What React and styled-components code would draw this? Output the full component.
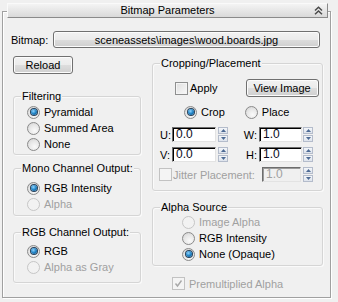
import styled, { createGlobalStyle } from "styled-components";

const GlobalStyle = createGlobalStyle`
  body {
    margin: 0;
    background: #f0f0f0;
    font-family: "Liberation Sans", Arial, sans-serif;
    font-size: 11px;
    color: #000;
  }
  * { box-sizing: border-box; }
`;

const Page = styled.div`
  width: 338px;
  height: 302px;
  padding: 11px 0 0 2px;
`;

const Frame = styled.div`
  width: 329px;
  height: 287px;
  border: 1px solid #a0a0a0;
  box-shadow: inset 1px 1px 0 #fff, 1px 1px 0 #fff;
`;

const TitleBar = styled.div`
  margin: -9px 2px 0 4px;
  height: 15px;
  display: grid;
  grid-template-columns: 1fr auto 1fr;
  align-items: center;
  border: 1px solid;
  border-color: #fafafa #8a8a8a #8a8a8a #fafafa;
  background: linear-gradient(#f4f4f4, #d9d9d9);
  line-height: 13px;
`;

const Title = styled.span`
  grid-column: 2;
`;

const Collapse = styled.svg`
  grid-column: 3;
  justify-self: end;
  margin-right: 4px;
`;

const BitmapRow = styled.div`
  display: flex;
  align-items: center;
  margin-top: 13px;
  padding-left: 8px;
`;

const Label = styled.span`
  width: ${(p) => p.$w || "auto"}px;
  flex: none;
  color: ${(p) => (p.$disabled ? "#a0a0a0" : "#000")};
  text-align: ${(p) => p.$align || "left"};
  padding-right: ${(p) => (p.$align === "right" ? 2 : 0)}px;
  white-space: nowrap;
`;

const Button = styled.button`
  width: ${(p) => p.$w}px;
  height: ${(p) => p.$h || 18}px;
  flex: none;
  padding: 0;
  font: inherit;
  color: #000;
  border: 1px solid #707070;
  border-radius: 3px;
  background: linear-gradient(#f2f2f2 0%, #ebebeb 50%, #dddddd 51%, #cfcfcf 100%);
  box-shadow: inset 0 0 0 1px #fcfcfc;
  margin-left: ${(p) => p.$ml || 0}px;
`;

const Body = styled.div`
  display: flex;
  gap: 11px;
  margin-top: 8px;
  padding-left: 10px;
`;

const Column = styled.div`
  width: ${(p) => p.$w}px;
  display: flex;
  flex-direction: column;
  align-items: flex-start;
`;

const Group = styled.div`
  align-self: stretch;
  margin-top: ${(p) => p.$mt}px;
  border: 1px solid #d5d5d5;
  border-radius: 3px;
  box-shadow: inset 1px 1px 0 #fafafa, 1px 1px 0 #fafafa;
  display: flex;
  flex-direction: column;
`;

const Legend = styled.div`
  align-self: flex-start;
  margin: -7px 0 0 7px;
  padding: 0 1px;
  line-height: 13px;
  background: #f0f0f0;
  white-space: nowrap;
`;

const GroupBody = styled.div`
  display: flex;
  flex-direction: column;
  padding: ${(p) => p.$pad};
`;

const RadioRow = styled.label`
  display: flex;
  align-items: center;
  height: 16px;
  padding-left: ${(p) => p.$indent || 0}px;
  gap: 4px;
  color: ${(p) => (p.$disabled ? "#a0a0a0" : "#000")};
`;

const RadioDot = styled.span`
  width: 13px;
  height: 13px;
  flex: none;
  border-radius: 50%;
  border: 1px solid ${(p) => (p.$disabled ? "#c6c6c6" : "#8a8a8a")};
  background: ${(p) =>
    p.$disabled
      ? "#f2f2f2"
      : "radial-gradient(circle at 60% 70%, #fafafa 0%, #e6e6e6 55%, #cfcfcf 100%)"};
  display: grid;
  place-items: center;

  &::after {
    content: "";
    width: 6px;
    height: 6px;
    border-radius: 50%;
    display: ${(p) => (p.$on ? "block" : "none")};
    background: radial-gradient(circle at 40% 35%, #8fd4ff 0%, #1f82c4 50%, #0b4a7e 100%);
    box-shadow: 0 0 0 1px #27415a;
  }
`;

const Check = styled.span`
  width: 13px;
  height: 13px;
  flex: none;
  border: 1px solid ${(p) => (p.$disabled ? "#c2c2c2" : "#8e8f8f")};
  background: ${(p) =>
    p.$disabled ? "#f4f4f4" : "linear-gradient(135deg, #dedede, #f9f9f9)"};
  box-shadow: inset 0 0 0 1px #f4f4f4;
  display: grid;
  place-items: center;
`;

const CheckRow = styled.label`
  display: flex;
  align-items: center;
  gap: ${(p) => p.$gap || 4}px;
  height: ${(p) => p.$h || 13}px;
  margin-top: ${(p) => p.$mt || 0}px;
  padding-left: ${(p) => p.$indent || 0}px;
  color: ${(p) => (p.$disabled ? "#a0a0a0" : "#000")};
`;

const Row = styled.div`
  display: flex;
  align-items: center;
  height: ${(p) => p.$h}px;
  margin-top: ${(p) => p.$mt}px;
  padding-left: ${(p) => p.$indent || 0}px;
`;

const Field = styled.div`
  width: ${(p) => p.$w}px;
  height: 15px;
  flex: none;
  border: 1px solid;
  border-color: #6d6d6d #e3e3e3 #e3e3e3 #6d6d6d;
  box-shadow: inset 1px 1px 0 ${(p) => (p.$disabled ? "#9a9a9a" : "#000")};
  background: ${(p) => (p.$disabled ? "#f0f0f0" : "#fff")};
  color: ${(p) => (p.$disabled ? "#a0a0a0" : "#0a0a20")};
  font-size: 12px;
  line-height: 13px;
  padding-left: 3px;
`;

const Spinner = styled.div`
  width: 10px;
  height: 15px;
  flex: none;
  margin-left: ${(p) => p.$ml}px;
  display: grid;
  grid-template-rows: 1fr 1fr;
  gap: 1px;
`;

const SpinHalf = styled.div`
  border: 1px solid #b4bccb;
  background: linear-gradient(#f4f6f9, #dde3ec);
  display: grid;
  place-items: center;
`;

function Radio({ on, disabled, children, indent }) {
  return (
    <RadioRow $disabled={disabled} $indent={indent}>
      <RadioDot $on={on} $disabled={disabled} />
      {children}
    </RadioRow>
  );
}

function Tick({ color }) {
  return (
    <svg width="9" height="9" viewBox="0 0 9 9">
      <path d="M1.5 4.5 L3.5 7 L7.5 1.5" fill="none" stroke={color} strokeWidth="1.4" />
    </svg>
  );
}

function Spin({ ml }) {
  return (
    <Spinner $ml={ml}>
      <SpinHalf>
        <svg width="5" height="3" viewBox="0 0 5 3">
          <path d="M0 3 L2.5 0 L5 3 Z" fill="#4d6a94" />
        </svg>
      </SpinHalf>
      <SpinHalf>
        <svg width="5" height="3" viewBox="0 0 5 3">
          <path d="M0 0 L2.5 3 L5 0 Z" fill="#4d6a94" />
        </svg>
      </SpinHalf>
    </Spinner>
  );
}

export default function App() {
  return (
    <>
      <GlobalStyle />
      <Page>
        <Frame>
          <TitleBar>
            <Title>Bitmap Parameters</Title>
            <Collapse width="9" height="9" viewBox="0 0 9 9">
              <path d="M1 4.5 L4.5 1.2 L8 4.5 M1 8.3 L4.5 5 L8 8.3" fill="none" stroke="#4a4a4a" strokeWidth="1.5" />
            </Collapse>
          </TitleBar>

          <BitmapRow>
            <Label $w={42}>Bitmap:</Label>
            <Button $w={267} $h={17}>sceneassets\images\wood.boards.jpg</Button>
          </BitmapRow>

          <Body>
            <Column $w={128}>
              <Button $w={60}>Reload</Button>

              <Group $mt={22}>
                <Legend>Filtering</Legend>
                <GroupBody $pad="1px 0 2px 13px">
                  <Radio on>Pyramidal</Radio>
                  <Radio>Summed Area</Radio>
                  <Radio>None</Radio>
                </GroupBody>
              </Group>

              <Group $mt={13}>
                <Legend>Mono Channel Output:</Legend>
                <GroupBody $pad="5px 0 3px 13px">
                  <Radio on>RGB Intensity</Radio>
                  <Radio disabled>Alpha</Radio>
                </GroupBody>
              </Group>

              <Group $mt={16}>
                <Legend>RGB Channel Output:</Legend>
                <GroupBody $pad="4px 0 7px 13px">
                  <Radio on>RGB</Radio>
                  <Radio disabled>Alpha as Gray</Radio>
                </GroupBody>
              </Group>
            </Column>

            <Column $w={171}>
              <Group $mt={7}>
                <Legend>Cropping/Placement</Legend>
                <GroupBody $pad="0 0 8px 0">
                  <Row $h={18} $mt={9} $indent={22}>
                    <CheckRow $gap={2}>
                      <Check />
                      Apply
                    </CheckRow>
                    <Button $w={73} $ml={28}>View Image</Button>
                  </Row>
                  <Row $h={16} $mt={7} $indent={31}>
                    <Radio on>Crop</Radio>
                    <Radio indent={20}>Place</Radio>
                  </Row>
                  <Row $h={15} $mt={7} $indent={7}>
                    <Label $w={12}>U:</Label>
                    <Field $w={44}>0.0</Field>
                    <Spin ml={2} />
                    <Label $w={31} $align="right">W:</Label>
                    <Field $w={43}>1.0</Field>
                    <Spin ml={1} />
                  </Row>
                  <Row $h={15} $mt={5} $indent={7}>
                    <Label $w={12}>V:</Label>
                    <Field $w={44}>0.0</Field>
                    <Spin ml={2} />
                    <Label $w={31} $align="right">H:</Label>
                    <Field $w={43}>1.0</Field>
                    <Spin ml={1} />
                  </Row>
                  <Row $h={15} $mt={5} $indent={6}>
                    <CheckRow $gap={1} $disabled>
                      <Check $disabled />
                      <Label $w={89} $disabled>Jitter Placement:</Label>
                    </CheckRow>
                    <Field $w={39} $disabled>1.0</Field>
                    <Spin ml={2} />
                  </Row>
                </GroupBody>
              </Group>

              <Group $mt={16}>
                <Legend>Alpha Source</Legend>
                <GroupBody $pad="0 0 3px 29px">
                  <Radio disabled>Image Alpha</Radio>
                  <Radio>RGB Intensity</Radio>
                  <Radio on>None (Opaque)</Radio>
                </GroupBody>
              </Group>

              <CheckRow $mt={11} $indent={20} $disabled>
                <Check $disabled>
                  <Tick color="#a8a8a8" />
                </Check>
                Premultiplied Alpha
              </CheckRow>
            </Column>
          </Body>
        </Frame>
      </Page>
    </>
  );
}
